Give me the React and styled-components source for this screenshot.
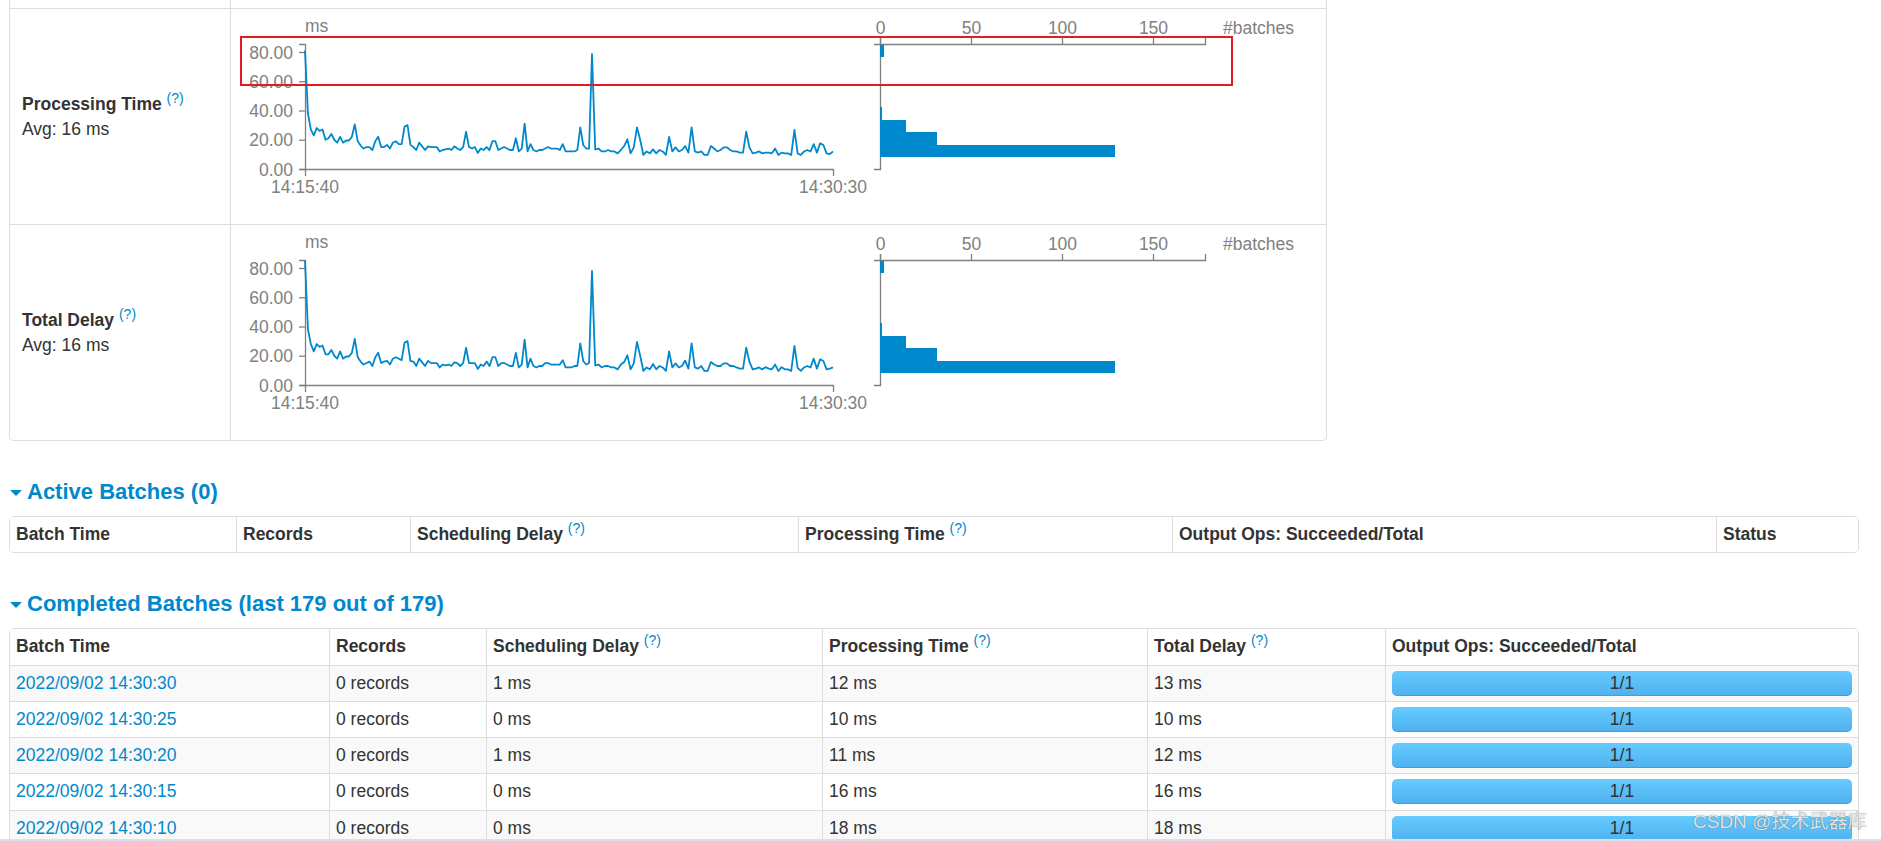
import React from "react";
import styled, { createGlobalStyle } from "styled-components";

const GlobalStyle = createGlobalStyle`
  * { box-sizing: border-box; }
  html, body { margin: 0; padding: 0; background: #fff; }
  body {
    font-family: "Liberation Sans", Arial, Helvetica, sans-serif;
    font-size: 17.5px;
    line-height: 25px;
    color: #333;
  }
`;

const Page = styled.div`
  position: relative;
  padding: 0 0 40px 9px;
  min-height: 841px;
`;

/* ---------- statistics card ---------- */
const StatsCard = styled.div`
  position: relative;
  width: 1318px;
  border: 1px solid #ddd;
  border-top: none;
  border-radius: 0 0 5px 5px;
`;

const StatRow = styled.div`
  display: grid;
  grid-template-columns: 221px 1095px;
  height: ${(p) => p.$h}px;
  border-bottom: ${(p) => (p.$last ? "none" : "1px solid #ddd")};
`;

const StatLabel = styled.div`
  border-right: 1px solid #ddd;
  display: flex;
  flex-direction: column;
  justify-content: center;
  padding-left: 12px;
`;

const StatTitle = styled.div`
  font-weight: bold;
`;

const StatValue = styled.div``;

const ChartCell = styled.div`
  overflow: hidden;
`;

const ChartSvg = styled.svg`
  display: block;
`;

const AxisPath = styled.path`
  fill: none;
  stroke: #808080;
  stroke-width: 1.3px;
`;

const AxisText = styled.text`
  fill: #808080;
  font-family: "Liberation Sans", Arial, sans-serif;
  font-size: 17.5px;
`;

const DataLine = styled.path`
  fill: none;
  stroke: #0088cc;
  stroke-width: 1.8px;
  stroke-linejoin: round;
`;

const Bar = styled.rect`
  fill: #0088cc;
  shape-rendering: crispEdges;
`;

const Help = styled.sup`
  font-size: 14px;
  font-weight: normal;
  color: #0088cc;
  line-height: 0;
  vertical-align: super;
`;

const Annotation = styled.div`
  position: absolute;
  left: 230px;
  top: 36px;
  width: 993px;
  height: 50px;
  border: 2px solid #e31b23;
  pointer-events: none;
`;

/* ---------- sections / tables ---------- */
const SectionTitle = styled.h4`
  display: flex;
  align-items: center;
  margin: 38px 0 12px 0;
  font-size: 22px;
  line-height: 25px;
  font-weight: bold;
  color: #0088cc;
`;

const Caret = styled.span`
  width: 0;
  height: 0;
  border-left: 6px solid transparent;
  border-right: 6px solid transparent;
  border-top: 6px solid #0088cc;
  margin: 2px 5px 0 1px;
`;

const DataTable = styled.div`
  width: 1850px;
  border: 1px solid #ddd;
  border-radius: 5px;
  overflow: hidden;
`;

const TRow = styled.div`
  display: grid;
  grid-template-columns: ${(p) => p.$cols};
  background: ${(p) => (p.$striped ? "#f9f9f9" : "#fff")};
  & + & {
    border-top: 1px solid #ddd;
  }
`;

const Cell = styled.div`
  padding: 6px 6px;
  line-height: 23.25px;
  font-weight: ${(p) => (p.$head ? "bold" : "normal")};
  white-space: nowrap;
  & + & {
    border-left: 1px solid #ddd;
  }
`;

const BarCell = styled(Cell)`
  padding: 5px 6px;
  align-self: stretch;
  display: flex;
  align-items: center;
`;

const Link = styled.a`
  color: #0088cc;
  text-decoration: none;
`;

const Progress = styled.div`
  width: 100%;
  height: 25px;
  border-radius: 5px;
  background: linear-gradient(to bottom, #66cbff 0%, #4fb1ef 100%);
  box-shadow: inset 0 -1px 0 rgba(0, 80, 160, 0.18);
  text-align: center;
  line-height: 25px;
  color: #333;
`;

const Watermark = styled.div`
  position: absolute;
  left: 1693px;
  top: 810px;
  font-family: "Liberation Sans", "Noto Sans CJK SC", sans-serif;
  font-size: 19px;
  line-height: 24px;
  color: rgba(235, 235, 235, 0.95);
  text-shadow: 0 0 1px rgba(60, 60, 60, 0.75);
  white-space: nowrap;
  pointer-events: none;
`;

const BottomEdge = styled.div`
  position: fixed;
  left: 0;
  right: 0;
  bottom: 0;
  height: 2px;
  background: #d9e0e8;
`;

/* ---------- data ---------- */
const part1 = [
  81, 38, 27, 23, 28, 26, 27, 20, 21, 24,
  20, 18, 22, 18, 19.5, 19.5, 22, 30.5, 19, 16,
  14, 15, 15, 13, 19, 22, 15, 15, 16.5, 14,
  18, 19, 17, 17, 29, 30, 16.5, 15, 13, 18,
  15.5, 13, 15.5, 15, 15, 15, 12, 13, 13.5, 14,
  13, 15.5, 14, 13, 15, 25.5, 15, 14, 15, 11,
  14, 13, 15, 13, 19, 19, 13, 14, 15, 14,
  13, 13, 21, 12, 14, 31, 12, 17, 13, 12,
  13, 13, 14, 15, 14, 14, 14,
];
const part2 = [
  13, 17, 12, 12, 12, 12, 13, 28.5, 16.4, 14,
  14, 78.6, 13.4, 14, 12, 12, 13, 12, 12, 10.7,
  13, 15.7, 20.3, 10.7, 14.8, 28.5, 19.8, 9.6, 12, 10.7,
  13.4, 10.7, 13, 12, 9.6, 22, 12, 14.8, 12, 13,
  15.7, 11.2, 28.5, 12, 11.2, 12, 9.6, 9.6, 15.7, 14,
  12, 13, 14.8, 14.8, 13, 12, 12, 11.2, 11.2, 25.5,
  14.8, 10.7, 11.2, 12, 10.7, 11.2, 11.2, 10.7, 14, 9.6,
  11.2, 10.7, 10.7, 9.6, 26.7, 10.7, 9.6, 12, 13, 12,
  17, 11.2, 17.6, 16.4, 10.7, 10.2, 12,
];
const procData = [...part1, ...part2];
const delayData = procData.map((v, i) =>
  i === 0 ? 85 : i === 98 ? 78 : v + (i % 5 === 2 ? 1 : 0)
);
const PEAK = 98;

function linePath(data) {
  const n = data.length;
  return data
    .map((v, i) => {
      const x =
        i <= PEAK ? 74 + i * (287 / PEAK) : 361 + (i - PEAK) * (241 / (n - 1 - PEAK));
      const y = 160 - v * 1.4625;
      return `${i ? "L" : "M"}${x.toFixed(2)},${y.toFixed(2)}`;
    })
    .join("");
}

const yTicks = [0, 20, 40, 60, 80];
const xHistTicks = [0, 50, 100, 150];
const bars = [
  { y: 36, h: 12, w: 4 },
  { y: 98, h: 13, w: 2 },
  { y: 111, h: 12, w: 26 },
  { y: 123, h: 13, w: 57 },
  { y: 136, h: 12, w: 235 },
];

function Chart({ data, height }) {
  return (
    <ChartSvg width="1095" height={height} viewBox={`0 0 1095 ${height}`}>
      {/* timeline */}
      <AxisText x="74" y="23">ms</AxisText>
      <AxisPath d="M68,35.5H74.5V160.5H68" />
      {yTicks.map((t) => {
        const y = 160.5 - t * 1.4625;
        return (
          <g key={t}>
            <AxisPath d={`M68,${y}H74.5`} />
            <AxisText x="62" y={y + 6} textAnchor="end">
              {t.toFixed(2)}
            </AxisText>
          </g>
        );
      })}
      <AxisPath d="M74.5,167V160.5H602.5V167" />
      <AxisText x="74" y="184" textAnchor="middle">14:15:40</AxisText>
      <AxisText x="602" y="184" textAnchor="middle">14:30:30</AxisText>
      <DataLine d={linePath(data)} />

      {/* histogram */}
      <AxisPath d="M649.5,29V35.5H974.5V29" />
      <AxisPath d="M643,35.5H649.5V160.5H643" />
      {xHistTicks.map((t) => {
        const x = 649.5 + t * 1.82;
        return (
          <g key={t}>
            <AxisPath d={`M${x},29V35.5`} />
            <AxisText x={x} y="25" textAnchor="middle">
              {t}
            </AxisText>
          </g>
        );
      })}
      <AxisText x="992" y="25">#batches</AxisText>
      {bars.map((b, i) => (
        <Bar key={i} x="649" y={b.y} width={b.w} height={b.h} />
      ))}
    </ChartSvg>
  );
}

const activeCols = "226px 174px 388px 374px 544px 142px";
const doneCols = "319px 157px 336px 325px 238px 473px";

const batches = [
  { t: "2022/09/02 14:30:30", sd: "1 ms", pt: "12 ms", td: "13 ms" },
  { t: "2022/09/02 14:30:25", sd: "0 ms", pt: "10 ms", td: "10 ms" },
  { t: "2022/09/02 14:30:20", sd: "1 ms", pt: "11 ms", td: "12 ms" },
  { t: "2022/09/02 14:30:15", sd: "0 ms", pt: "16 ms", td: "16 ms" },
  { t: "2022/09/02 14:30:10", sd: "0 ms", pt: "18 ms", td: "18 ms" },
];

export default function App() {
  return (
    <Page>
      <GlobalStyle />
      <StatsCard>
        <StatRow $h={9}>
          <StatLabel />
          <ChartCell />
        </StatRow>
        <StatRow $h={216}>
          <StatLabel>
            <StatTitle>
              Processing Time <Help>(?)</Help>
            </StatTitle>
            <StatValue>Avg: 16 ms</StatValue>
          </StatLabel>
          <ChartCell>
            <Chart data={procData} height={215} />
          </ChartCell>
        </StatRow>
        <StatRow $h={215} $last>
          <StatLabel>
            <StatTitle>
              Total Delay <Help>(?)</Help>
            </StatTitle>
            <StatValue>Avg: 16 ms</StatValue>
          </StatLabel>
          <ChartCell>
            <Chart data={delayData} height={215} />
          </ChartCell>
        </StatRow>
        <Annotation />
      </StatsCard>

      <SectionTitle>
        <Caret />
        Active Batches (0)
      </SectionTitle>
      <DataTable>
        <TRow $cols={activeCols}>
          <Cell $head>Batch Time</Cell>
          <Cell $head>Records</Cell>
          <Cell $head>
            Scheduling Delay <Help>(?)</Help>
          </Cell>
          <Cell $head>
            Processing Time <Help>(?)</Help>
          </Cell>
          <Cell $head>Output Ops: Succeeded/Total</Cell>
          <Cell $head>Status</Cell>
        </TRow>
      </DataTable>

      <SectionTitle>
        <Caret />
        Completed Batches (last 179 out of 179)
      </SectionTitle>
      <DataTable>
        <TRow $cols={doneCols}>
          <Cell $head>Batch Time</Cell>
          <Cell $head>Records</Cell>
          <Cell $head>
            Scheduling Delay <Help>(?)</Help>
          </Cell>
          <Cell $head>
            Processing Time <Help>(?)</Help>
          </Cell>
          <Cell $head>
            Total Delay <Help>(?)</Help>
          </Cell>
          <Cell $head>Output Ops: Succeeded/Total</Cell>
        </TRow>
        {batches.map((b, i) => (
          <TRow key={b.t} $cols={doneCols} $striped={i % 2 === 0}>
            <Cell>
              <Link href="#">{b.t}</Link>
            </Cell>
            <Cell>0 records</Cell>
            <Cell>{b.sd}</Cell>
            <Cell>{b.pt}</Cell>
            <Cell>{b.td}</Cell>
            <BarCell>
              <Progress>1/1</Progress>
            </BarCell>
          </TRow>
        ))}
      </DataTable>

      <Watermark>CSDN @技术武器库</Watermark>
      <BottomEdge />
    </Page>
  );
}
